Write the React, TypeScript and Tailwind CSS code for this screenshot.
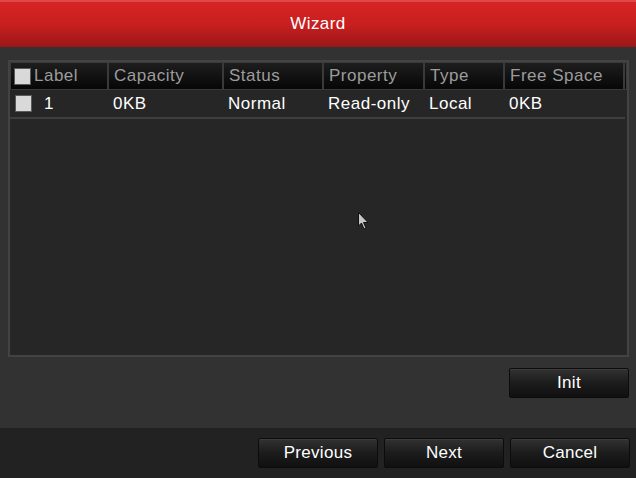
import React from "react";

const cols = [
  { key: "label", title: "Label", w: 98 },
  { key: "capacity", title: "Capacity", w: 115 },
  { key: "status", title: "Status", w: 100 },
  { key: "property", title: "Property", w: 101 },
  { key: "type", title: "Type", w: 80 },
  { key: "free", title: "Free Space", w: 120 },
];

const row = ["1", "0KB", "Normal", "Read-only", "Local", "0KB"];

function Btn({ children }: { children: React.ReactNode }) {
  return (
    <div className="w-[120px] h-[30px] flex items-center justify-center rounded-[2px] border border-[#0c0c0c] bg-gradient-to-b from-[#323232] via-[#1c1c1c] to-[#101010] text-white text-[17px] tracking-[0.3px] shadow-[inset_0_1px_0_#3c3c3c]">
      {children}
    </div>
  );
}

function Check({ cls }: { cls?: string }) {
  return <div className={"w-[17px] h-[17px] bg-[#d9d9d9] border border-[#5a5a5a] " + (cls || "")} />;
}

export default function App() {
  return (
    <div className="w-[636px] h-[478px] flex flex-col overflow-hidden" style={{ fontFamily: '"Liberation Sans", Arial, sans-serif' }}>
      <div className="h-[47px] flex items-center justify-center bg-gradient-to-b from-[#d82424] via-[#c81f1f] to-[#9c1717] border-t-2 border-[#e04848]">
        <span className="text-white text-[17px] tracking-[0.4px] -mt-[1px]">Wizard</span>
      </div>
      <div className="h-[381px] bg-[#323232] flex flex-col pt-[13px] pl-[8px] pr-[7px]">
        <div className="h-[297px] border-2 border-[#434343] bg-[#262626] flex flex-col">
          <div className="h-[28px] flex bg-[#1a1a1a]">
            {cols.map((c, i) => (
              <div
                key={c.key}
                style={{ width: c.w }}
                className="h-full flex items-center border border-[#3a3a3a] bg-gradient-to-b from-[#1e1e1e] to-[#070707] text-[#9c9c9c] text-[17px] tracking-[0.5px]"
              >
                {i === 0 ? (
                  <>
                    <Check cls="ml-[3px] mr-[3px]" />
                    <span>{c.title}</span>
                  </>
                ) : (
                  <span className="pl-[5px]">{c.title}</span>
                )}
              </div>
            ))}
            <div className="flex-1 h-full border border-[#3a3a3a] bg-gradient-to-b from-[#1e1e1e] to-[#070707]" />
          </div>
          <div className="h-[29px] flex items-center border-b-2 border-[#3e3e3e] mr-[2px] text-white text-[17px] tracking-[0.5px]">
            {cols.map((c, i) => (
              <div key={c.key} style={{ width: c.w }} className="flex items-center">
                {i === 0 ? (
                  <>
                    <Check cls="ml-[5px] mr-[12px]" />
                    <span>{row[i]}</span>
                  </>
                ) : (
                  <span className="pl-[5px]">{row[i]}</span>
                )}
              </div>
            ))}
          </div>
          <div className="flex-1 relative">
            <svg className="absolute left-[348px] top-[93px]" width="12" height="19" viewBox="0 0 12 19">
              <path d="M0.5 0.5 L0.5 14 L3.5 11 L6 17 L8 16 L5.5 10.5 L10 10.5 Z" fill="#c8c8c8" stroke="#111" strokeWidth="1" />
            </svg>
          </div>
        </div>
        <div className="flex justify-end mt-[11px]">
          <Btn>Init</Btn>
        </div>
      </div>
      <div className="h-[50px] bg-[#222222] flex justify-end items-start pt-[10px] pr-[6px] gap-[6px]">
        <Btn>Previous</Btn>
        <Btn>Next</Btn>
        <Btn>Cancel</Btn>
      </div>
    </div>
  );
}
